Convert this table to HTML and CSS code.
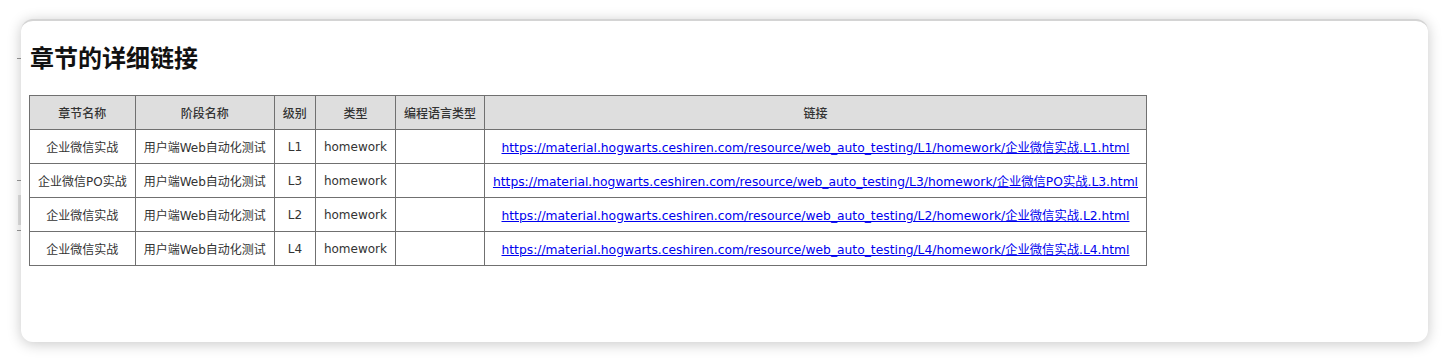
FILE: index.html
```html
<!DOCTYPE html>
<html lang="zh-CN">
<head>
    <meta charset="UTF-8">
    <meta name="viewport" content="width=device-width, initial-scale=1.0">
    <title>章节的详细链接</title>
    <link rel="stylesheet" href="styles.css">
</head>
<body>
    <div class="backdrop">
        <div class="ghost">
            <span class="ghost-mark top"></span>
            <span class="ghost-mark mid"></span>
            <span class="ghost-block"></span>
            <span class="ghost-mark low"></span>
        </div>
        <div class="dialog">
            <h2 class="title">章节的详细链接</h2>
            <table class="links">
                <thead>
                    <tr>
                        <th class="col-chapter">章节名称</th>
                        <th class="col-stage">阶段名称</th>
                        <th class="col-level">级别</th>
                        <th class="col-type">类型</th>
                        <th class="col-lang">编程语言类型</th>
                        <th class="col-link">链接</th>
                    </tr>
                </thead>
                <tbody>
                    <tr>
                        <td>企业微信实战</td>
                        <td>用户端Web自动化测试</td>
                        <td>L1</td>
                        <td>homework</td>
                        <td></td>
                        <td><a href="#">https://material.hogwarts.ceshiren.com/resource/web_auto_testing/L1/homework/企业微信实战.L1.html</a></td>
                    </tr>
                    <tr>
                        <td>企业微信PO实战</td>
                        <td>用户端Web自动化测试</td>
                        <td>L3</td>
                        <td>homework</td>
                        <td></td>
                        <td><a href="#">https://material.hogwarts.ceshiren.com/resource/web_auto_testing/L3/homework/企业微信PO实战.L3.html</a></td>
                    </tr>
                    <tr>
                        <td>企业微信实战</td>
                        <td>用户端Web自动化测试</td>
                        <td>L2</td>
                        <td>homework</td>
                        <td></td>
                        <td><a href="#">https://material.hogwarts.ceshiren.com/resource/web_auto_testing/L2/homework/企业微信实战.L2.html</a></td>
                    </tr>
                    <tr>
                        <td>企业微信实战</td>
                        <td>用户端Web自动化测试</td>
                        <td>L4</td>
                        <td>homework</td>
                        <td></td>
                        <td><a href="#">https://material.hogwarts.ceshiren.com/resource/web_auto_testing/L4/homework/企业微信实战.L4.html</a></td>
                    </tr>
                </tbody>
            </table>
        </div>
    </div>
</body>
</html>
```

FILE: styles.css
```css
body {
    margin: 0;
    padding: 0;
    background-color: #fff;
    font-family: "DejaVu Sans", "Noto Sans CJK SC", sans-serif;
    color: #333;
}

.backdrop {
    display: flex;
    height: 360px;
    padding: 19px 18px 18px 0;
    box-sizing: border-box;
}

.ghost {
    width: 21px;
    display: flex;
    flex-direction: column;
    align-items: flex-end;
    padding-top: 39px;
}

.ghost-mark {
    display: block;
    width: 4px;
    height: 1px;
    background-color: #999;
}

.ghost-mark.mid {
    margin-top: 121px;
}

.ghost-block {
    display: block;
    width: 3px;
    height: 30px;
    margin-top: 14px;
    background-color: #e2e2e2;
}

.ghost-mark.low {
    margin-top: 5px;
}

.dialog {
    flex: 1;
    background-color: #fff;
    border-top: 2px solid #d4d4d4;
    border-radius: 12px;
    padding: 0 8px;
    box-shadow: 0 2px 14px rgba(0, 0, 0, 0.22);
}

.title {
    margin: 20px 0 22px 1px;
    font-family: "Noto Sans CJK SC", sans-serif;
    font-size: 24px;
    font-weight: 700;
    line-height: 32px;
    color: #111;
}

.links {
    border-collapse: collapse;
    font-size: 12px;
    color: #333;
}

.links th,
.links td {
    border: 1px solid #707070;
    height: 34px;
    padding: 0 8px;
    text-align: center;
    white-space: nowrap;
    box-sizing: border-box;
}

.links th {
    background-color: #dedede;
    font-weight: 500;
    font-family: "Noto Sans CJK SC", sans-serif;
}

.links td {
    font-family: "DejaVu Sans", "Noto Sans CJK SC", sans-serif;
}

.links a {
    color: #0000ee;
    font-size: 12.3px;
    text-decoration: underline;
}

.col-chapter { width: 90px; }
.col-stage { width: 123px; }
.col-level { width: 25px; }
.col-type { width: 64px; }
.col-lang { width: 73px; }
```
